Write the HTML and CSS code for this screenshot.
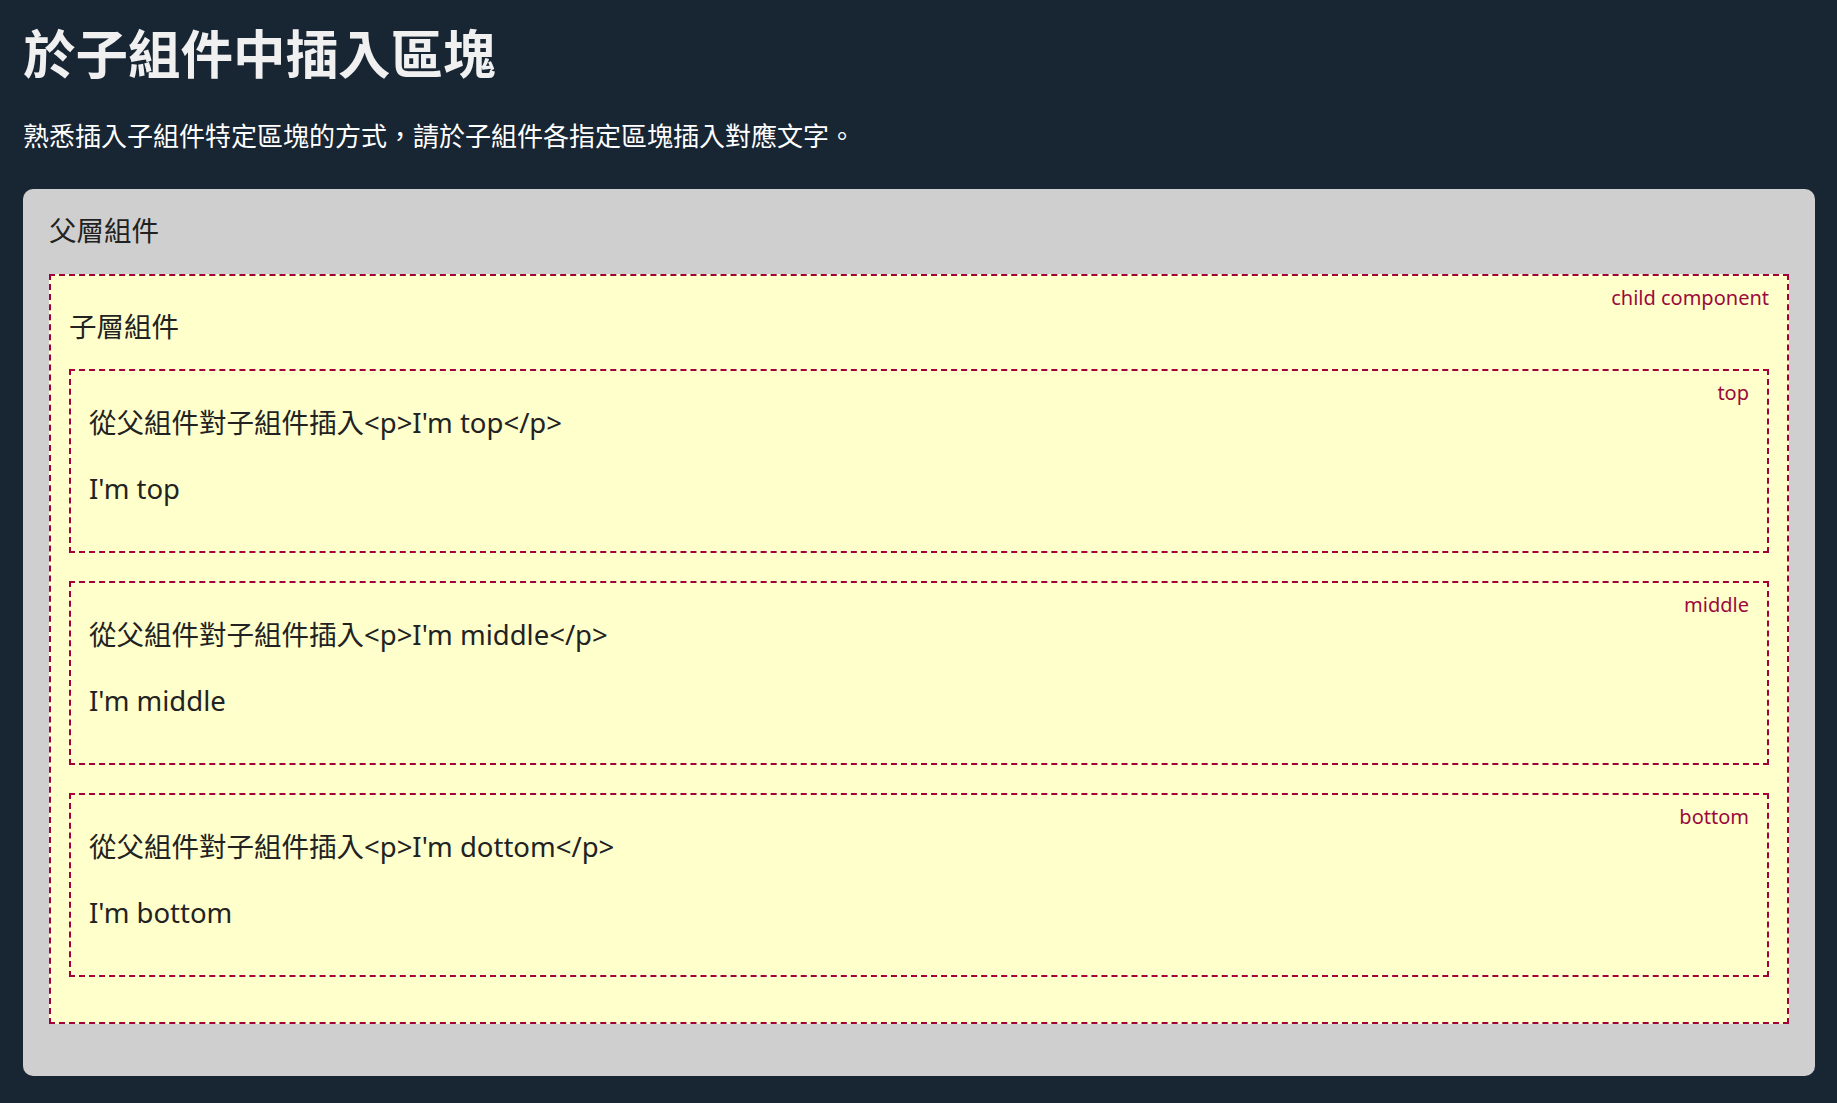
FILE: index.html
```html
<!DOCTYPE html>
<html lang="zh-Hant">
<head>
<meta charset="utf-8">
<title>於子組件中插入區塊</title>
<link rel="stylesheet" href="styles.css">
</head>
<body>
  <h1 class="title">於子組件中插入區塊</h1>
  <p class="subtitle">熟悉插入子組件特定區塊的方式，請於子組件各指定區塊插入對應文字。</p>
  <section class="parent">
    <p class="parent-name">父層組件</p>
    <div class="child">
      <span class="tag">child component</span>
      <p class="child-name">子層組件</p>
      <div class="slots">
        <div class="slot">
          <span class="tag">top</span>
          <p class="line">從父組件對子組件插入&lt;p&gt;I'm top&lt;/p&gt;</p>
          <p class="line">I'm top</p>
        </div>
        <div class="slot">
          <span class="tag">middle</span>
          <p class="line">從父組件對子組件插入&lt;p&gt;I'm middle&lt;/p&gt;</p>
          <p class="line">I'm middle</p>
        </div>
        <div class="slot">
          <span class="tag">bottom</span>
          <p class="line">從父組件對子組件插入&lt;p&gt;I'm dottom&lt;/p&gt;</p>
          <p class="line">I'm bottom</p>
        </div>
      </div>
    </div>
  </section>
</body>
</html>
```
FILE: styles.css
```css
* { box-sizing: border-box; }

html, body {
  background: #182533;
}

body {
  margin: 0;
  padding: 0 22px 27px 23px;
  font-family: "Noto Sans", "Noto Sans CJK TC", sans-serif;
  color: #222;
}

.title {
  margin: 20px 0 0;
  font-size: 52.5px;
  line-height: 62px;
  font-weight: 700;
  color: #f0f0f0;
  font-family: "Noto Sans CJK TC", sans-serif;
}

.subtitle {
  margin: 33px 0 35px;
  font-size: 26px;
  line-height: 39px;
  color: #ffffff;
  font-family: "Noto Sans CJK TC", sans-serif;
}

.parent {
  background: #cfcfcf;
  border-radius: 10px;
  padding: 22px 26px 52px;
}

.parent-name,
.child-name,
.line {
  margin: 0;
  font-size: 27.5px;
  line-height: 40px;
}

.parent-name {
  margin-bottom: 23px;
}

.child {
  position: relative;
  background: #ffffcc;
  border: 2px dashed #a1003b;
  padding: 31px 18px 45px;
}

.child-name {
  margin-bottom: 22px;
}

.tag {
  position: absolute;
  top: 8px;
  right: 18px;
  font-size: 20px;
  line-height: 28px;
  color: #9b0a3c;
}

.slots {
  display: flex;
  flex-direction: column;
  gap: 28px;
}

.slot {
  position: relative;
  border: 2px dashed #a1003b;
  padding: 32px 18px 42px;
  display: flex;
  flex-direction: column;
  gap: 26px;
}
```
